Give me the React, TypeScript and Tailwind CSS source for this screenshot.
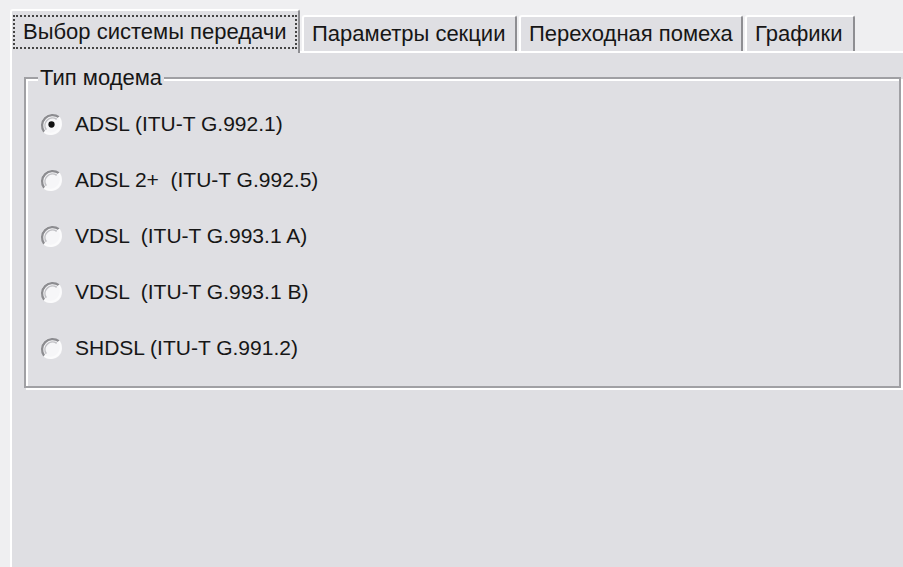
import { useState } from 'react';

const TABS = [
  { label: 'Выбор системы передачи', width: 'w-[290px]' },
  { label: 'Параметры секции', width: 'w-[215px]' },
  { label: 'Переходная помеха', width: 'w-[224px]' },
  { label: 'Графики', width: 'w-[110px]' },
];

const MODEMS = [
  'ADSL (ITU-T G.992.1)',
  'ADSL 2+  (ITU-T G.992.5)',
  'VDSL  (ITU-T G.993.1 A)',
  'VDSL  (ITU-T G.993.1 B)',
  'SHDSL (ITU-T G.991.2)',
];

function RadioMark({ checked }: { checked: boolean }) {
  // classic sunken radio button
  return (
    <svg width="23" height="23" viewBox="0 0 22 22" className="shrink-0">
      <circle cx="11" cy="11" r="10" fill="#f6f6f8" />
      <path d="M4 18 A10 10 0 0 1 18 4" fill="none" stroke="#8c8c90" strokeWidth="2.2" />
      <path d="M6 16 A7.2 7.2 0 0 1 16 6" fill="none" stroke="#c0c0c4" strokeWidth="1.5" />
      <path d="M18 4 A10 10 0 0 1 4 18" fill="none" stroke="#fbfbfc" strokeWidth="2" />
      {checked && <circle cx="11" cy="11" r="3" fill="#111" />}
    </svg>
  );
}

export default function App() {
  const [active, setActive] = useState(0);
  const [modem, setModem] = useState(0);

  return (
    <div
      className="w-[903px] h-[567px] overflow-hidden bg-[#efeff1] pt-[9px] pl-[10px] text-[#161616]"
      style={{ fontFamily: '"Liberation Sans", Arial, sans-serif' }}
    >
      <div className="flex h-[42px] items-end gap-[2px]">
        {TABS.map((tab, i) =>
          i === active ? (
            <div
              key={tab.label}
              className={`${tab.width} relative z-10 -mb-[2px] flex h-[44px] shrink-0 flex-col rounded-tl-[3px] rounded-tr-[3px] border-l-2 border-t-2 border-r-2 border-l-white border-t-white border-r-[#8e8e92] bg-[#dfdfe3]`}
            >
              <div className="mx-[1px] mt-[4px] mb-[4px] flex flex-1 items-center border-2 border-dotted border-[#444] pl-[8px] text-[22px] leading-none">
                {tab.label}
              </div>
            </div>
          ) : (
            <button
              key={tab.label}
              onClick={() => setActive(i)}
              className={`${tab.width} flex h-[36px] shrink-0 items-center rounded-tl-[3px] rounded-tr-[3px] border-l-2 border-t-2 border-r-2 border-l-white border-t-white border-r-[#8e8e92] bg-[#dfdfe3] pl-[8px] pb-[1px] text-left text-[22px] leading-none`}
            >
              {tab.label}
            </button>
          ),
        )}
      </div>

      <div className="h-[600px] w-[910px] border-l-2 border-t-2 border-white bg-[#dfdfe3] pl-[12px] pt-[12px]">
        {active === 0 && (
          <fieldset className="h-[323px] w-[877px] border-2 border-[#a0a0a4] px-[12px] shadow-[inset_2px_2px_0_#fff,2px_2px_0_#fff]">
            <legend className="bg-[#dfdfe3] px-[2px] text-[22px] leading-[25px]">Тип модема</legend>
            <div className="flex flex-col pt-[6px]">
              {MODEMS.map((m, i) => (
                <label
                  key={m}
                  onClick={() => setModem(i)}
                  className="flex h-[56px] cursor-default items-center gap-[12px] pl-[2px] text-[21px] whitespace-pre"
                >
                  <RadioMark checked={modem === i} />
                  <span>{m}</span>
                </label>
              ))}
            </div>
          </fieldset>
        )}
      </div>
    </div>
  );
}
